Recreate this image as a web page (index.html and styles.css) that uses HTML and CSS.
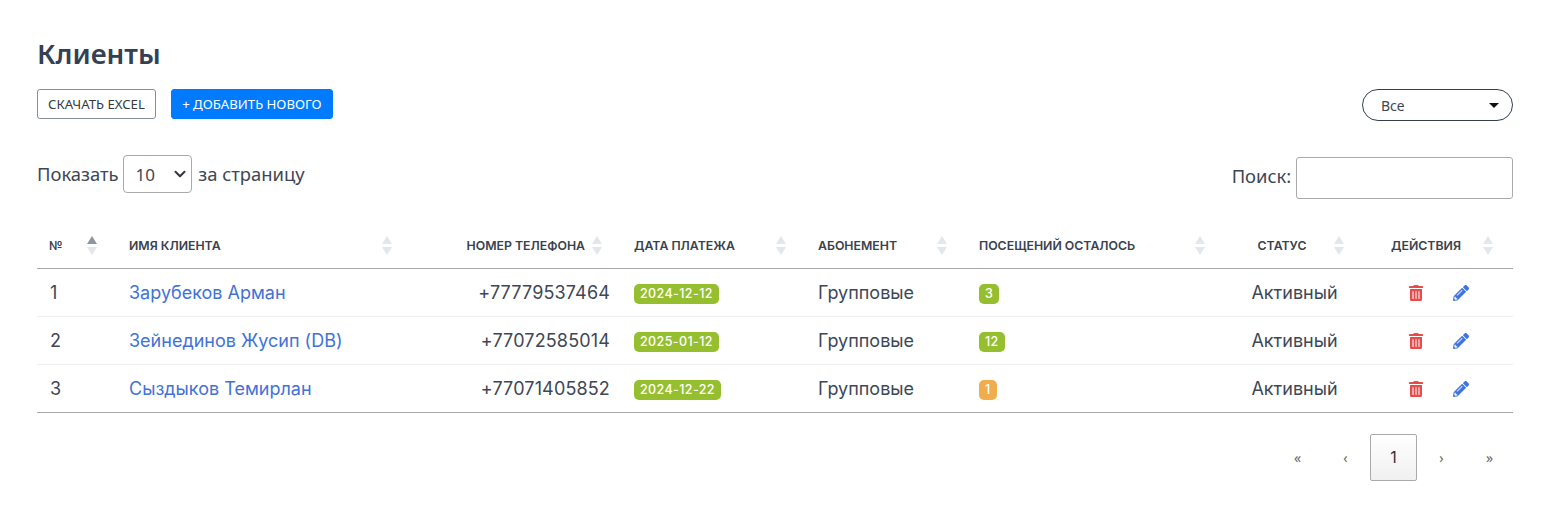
FILE: index.html
```html
<!DOCTYPE html>
<html lang="ru">
<head>
  <meta charset="UTF-8" />
  <title>Клиенты</title>
  <link rel="stylesheet" href="styles.css">
</head>
<body>
  <div class="container">
    <h1>Клиенты</h1>

    <div class="toolbar">
      <div class="toolbar-buttons">
        <button class="btn btn-outline">СКАЧАТЬ EXCEL</button>
        <button class="btn btn-primary">+ ДОБАВИТЬ НОВОГО</button>
      </div>
      <div class="pill-select">
        <span>Все</span>
        <i class="caret"></i>
      </div>
    </div>

    <div class="table-controls">
      <label class="page-size">Показать
        <select>
          <option>10</option>
        </select>
        за страницу</label>
      <label class="search">Поиск: <input type="text" /></label>
    </div>

    <table>
      <colgroup>
        <col class="col-num" />
        <col class="col-name" />
        <col class="col-phone" />
        <col class="col-date" />
        <col class="col-plan" />
        <col class="col-visits" />
        <col class="col-status" />
        <col class="col-actions" />
      </colgroup>
      <thead>
        <tr>
          <th class="sorted">№</th>
          <th>Имя клиента</th>
          <th class="right">Номер телефона</th>
          <th>Дата платежа</th>
          <th>Абонемент</th>
          <th>Посещений осталось</th>
          <th class="center">Статус</th>
          <th class="center">Действия</th>
        </tr>
      </thead>
      <tbody>
        <tr>
          <td class="num">1</td>
          <td><a href="#">Зарубеков Арман</a></td>
          <td class="right phone">+77779537464</td>
          <td><span class="badge green">2024-12-12</span></td>
          <td>Групповые</td>
          <td><span class="badge green">3</span></td>
          <td class="center">Активный</td>
          <td class="center actions">
            <svg class="icon trash" viewBox="0 0 448 512"><path d="M32 464a48 48 0 0 0 48 48h288a48 48 0 0 0 48-48V128H32zm272-256a16 16 0 0 1 32 0v224a16 16 0 0 1-32 0zm-96 0a16 16 0 0 1 32 0v224a16 16 0 0 1-32 0zm-96 0a16 16 0 0 1 32 0v224a16 16 0 0 1-32 0zM432 32H312l-9.4-18.7A24 24 0 0 0 281.1 0H166.8a23.72 23.72 0 0 0-21.4 13.3L136 32H16A16 16 0 0 0 0 48v32a16 16 0 0 0 16 16h416a16 16 0 0 0 16-16V48a16 16 0 0 0-16-16z"/></svg>
            <svg class="icon pencil" viewBox="0 0 512 512"><path d="M497.9 142.1l-46.1 46.1c-4.7 4.7-12.3 4.7-17 0l-111-111c-4.7-4.7-4.7-12.3 0-17l46.1-46.1c18.7-18.7 49.1-18.7 67.9 0l60.1 60.1c18.8 18.7 18.8 49.1 0 67.9zM284.2 99.8L21.6 362.4.4 483.9c-2.9 16.4 11.4 30.6 27.8 27.8l121.5-21.3 262.6-262.6c4.7-4.7 4.7-12.3 0-17l-111-111c-4.8-4.7-12.4-4.7-17.1 0zM124.1 339.9c-5.5-5.5-5.5-14.3 0-19.8l154-154c5.5-5.5 14.3-5.5 19.8 0s5.5 14.3 0 19.8l-154 154c-5.5 5.5-14.3 5.5-19.8 0zM88 424h48v36.3l-64.5 11.3-31.1-31.1L51.7 376H88v48z"/></svg>
          </td>
        </tr>
        <tr>
          <td class="num">2</td>
          <td><a href="#">Зейнединов Жусип (DB)</a></td>
          <td class="right phone">+77072585014</td>
          <td><span class="badge green">2025-01-12</span></td>
          <td>Групповые</td>
          <td><span class="badge green">12</span></td>
          <td class="center">Активный</td>
          <td class="center actions">
            <svg class="icon trash" viewBox="0 0 448 512"><path d="M32 464a48 48 0 0 0 48 48h288a48 48 0 0 0 48-48V128H32zm272-256a16 16 0 0 1 32 0v224a16 16 0 0 1-32 0zm-96 0a16 16 0 0 1 32 0v224a16 16 0 0 1-32 0zm-96 0a16 16 0 0 1 32 0v224a16 16 0 0 1-32 0zM432 32H312l-9.4-18.7A24 24 0 0 0 281.1 0H166.8a23.72 23.72 0 0 0-21.4 13.3L136 32H16A16 16 0 0 0 0 48v32a16 16 0 0 0 16 16h416a16 16 0 0 0 16-16V48a16 16 0 0 0-16-16z"/></svg>
            <svg class="icon pencil" viewBox="0 0 512 512"><path d="M497.9 142.1l-46.1 46.1c-4.7 4.7-12.3 4.7-17 0l-111-111c-4.7-4.7-4.7-12.3 0-17l46.1-46.1c18.7-18.7 49.1-18.7 67.9 0l60.1 60.1c18.8 18.7 18.8 49.1 0 67.9zM284.2 99.8L21.6 362.4.4 483.9c-2.9 16.4 11.4 30.6 27.8 27.8l121.5-21.3 262.6-262.6c4.7-4.7 4.7-12.3 0-17l-111-111c-4.8-4.7-12.4-4.7-17.1 0zM124.1 339.9c-5.5-5.5-5.5-14.3 0-19.8l154-154c5.5-5.5 14.3-5.5 19.8 0s5.5 14.3 0 19.8l-154 154c-5.5 5.5-14.3 5.5-19.8 0zM88 424h48v36.3l-64.5 11.3-31.1-31.1L51.7 376H88v48z"/></svg>
          </td>
        </tr>
        <tr>
          <td class="num">3</td>
          <td><a href="#">Сыздыков Темирлан</a></td>
          <td class="right phone">+77071405852</td>
          <td><span class="badge green">2024-12-22</span></td>
          <td>Групповые</td>
          <td><span class="badge orange">1</span></td>
          <td class="center">Активный</td>
          <td class="center actions">
            <svg class="icon trash" viewBox="0 0 448 512"><path d="M32 464a48 48 0 0 0 48 48h288a48 48 0 0 0 48-48V128H32zm272-256a16 16 0 0 1 32 0v224a16 16 0 0 1-32 0zm-96 0a16 16 0 0 1 32 0v224a16 16 0 0 1-32 0zm-96 0a16 16 0 0 1 32 0v224a16 16 0 0 1-32 0zM432 32H312l-9.4-18.7A24 24 0 0 0 281.1 0H166.8a23.72 23.72 0 0 0-21.4 13.3L136 32H16A16 16 0 0 0 0 48v32a16 16 0 0 0 16 16h416a16 16 0 0 0 16-16V48a16 16 0 0 0-16-16z"/></svg>
            <svg class="icon pencil" viewBox="0 0 512 512"><path d="M497.9 142.1l-46.1 46.1c-4.7 4.7-12.3 4.7-17 0l-111-111c-4.7-4.7-4.7-12.3 0-17l46.1-46.1c18.7-18.7 49.1-18.7 67.9 0l60.1 60.1c18.8 18.7 18.8 49.1 0 67.9zM284.2 99.8L21.6 362.4.4 483.9c-2.9 16.4 11.4 30.6 27.8 27.8l121.5-21.3 262.6-262.6c4.7-4.7 4.7-12.3 0-17l-111-111c-4.8-4.7-12.4-4.7-17.1 0zM124.1 339.9c-5.5-5.5-5.5-14.3 0-19.8l154-154c5.5-5.5 14.3-5.5 19.8 0s5.5 14.3 0 19.8l-154 154c-5.5 5.5-14.3 5.5-19.8 0zM88 424h48v36.3l-64.5 11.3-31.1-31.1L51.7 376H88v48z"/></svg>
          </td>
        </tr>
      </tbody>
    </table>

    <div class="pagination">
      <a href="#">«</a>
      <a href="#">‹</a>
      <a href="#" class="current">1</a>
      <a href="#">›</a>
      <a href="#">»</a>
    </div>
  </div>
</body>
</html>
```

FILE: styles.css
```css
* {
  box-sizing: border-box;
}
html, body {
  overflow: hidden;
}
body {
  margin: 0;
  font-family: Inter, sans-serif;
  font-size: 16px;
  color: #3d4756;
  background: #fff;
}
.container {
  padding: 36px 37px 0;
}
h1 {
  margin: 0 0 19px;
  font-family: "Noto Sans", sans-serif;
  font-size: 27.8px;
  line-height: 34px;
  font-weight: 600;
  color: #344054;
}
.toolbar {
  display: flex;
  justify-content: space-between;
  align-items: flex-start;
}
.toolbar-buttons {
  display: flex;
  gap: 15px;
}
.btn {
  height: 30px;
  padding: 0 10px;
  font-family: "Noto Sans", sans-serif;
  font-size: 13.2px;
  border-radius: 3px;
  cursor: pointer;
}
.btn-outline {
  background: #fff;
  color: #343a40;
  border: 1px solid #868e96;
}
.btn-primary {
  width: 162px;
  padding: 0;
  background: #007bff;
  color: #fff;
  border: 1px solid #007bff;
}
.pill-select {
  width: 151px;
  height: 32px;
  padding: 0 13px 0 18px;
  display: flex;
  align-items: center;
  justify-content: space-between;
  border: 1px solid #343f4f;
  border-radius: 16px;
  font-family: "Noto Sans", sans-serif;
  font-size: 14px;
}
.caret {
  width: 0;
  height: 0;
  border-left: 5px solid transparent;
  border-right: 5px solid transparent;
  border-top: 5px solid #111;
}
.table-controls {
  display: flex;
  justify-content: space-between;
  align-items: center;
  margin-top: 34px;
  height: 46px;
  font-family: "Noto Sans", sans-serif;
  font-size: 18.4px;
}
.page-size {
  margin-top: -8px;
}
.page-size select {
  appearance: none;
  width: 69px;
  height: 38px;
  margin-right: 1px;
  padding: 0 6px 0 11px;
  font-family: "Noto Sans", sans-serif;
  font-size: 17px;
  color: #3d4756;
  background: #fff url("data:image/svg+xml,%3Csvg xmlns='http://www.w3.org/2000/svg' viewBox='0 0 16 16'%3E%3Cpath fill='none' stroke='%23343a40' stroke-linecap='round' stroke-linejoin='round' stroke-width='2.8' d='M2 5l6 6 6-6'/%3E%3C/svg%3E") no-repeat right 3px center / 16px 12px;
  border: 1px solid #aaa;
  border-radius: 4px;
}
.search input {
  width: 217px;
  height: 42px;
  border: 1px solid #aaa;
  border-radius: 3px;
  vertical-align: middle;
}
table {
  width: 1476px;
  margin-top: 20px;
  table-layout: fixed;
  border-collapse: collapse;
}
.col-num { width: 80px; }
.col-name { width: 295px; }
.col-phone { width: 210px; }
.col-date { width: 184px; }
.col-plan { width: 161px; }
.col-visits { width: 258px; }
.col-status { width: 139px; }
.col-actions { width: 149px; }
th {
  position: relative;
  height: 47px;
  padding: 3px 37px 0 12px;
  font-size: 12.3px;
  font-weight: 600;
  text-align: left;
  text-transform: uppercase;
  white-space: nowrap;
  color: #39424e;
  border-bottom: 1px solid #aaa;
}
/* sort arrows */
th::before, th::after {
  content: "";
  position: absolute;
  right: 20px;
  width: 0;
  height: 0;
  border-left: 5px solid transparent;
  border-right: 5px solid transparent;
}
th::before {
  top: 15px;
  border-bottom: 8px solid #e3e6ea;
}
th::after {
  top: 26px;
  border-top: 8px solid #e3e6ea;
}
th.sorted::before {
  border-bottom-color: #8e96a3;
}
td {
  height: 48px;
  padding: 1px 12px 0;
  font-size: 18px;
  white-space: nowrap;
  border-bottom: 1px solid #f0f0f0;
}
tbody tr:last-child td {
  border-bottom: 1px solid #aaa;
}
.num {
  padding-left: 13px;
}
.right {
  text-align: right;
}
.phone {
  letter-spacing: 0.15px;
}
.center {
  text-align: center;
}
a {
  color: #4272d7;
  text-decoration: none;
}
.badge {
  display: inline-block;
  margin-top: 2px;
  padding: 0 6px;
  height: 20px;
  line-height: 20px;
  font-size: 12.5px;
  font-weight: 500;
  letter-spacing: 0.4px;
  color: #fff;
  border-radius: 5px;
  vertical-align: middle;
}
.green {
  background: #95bf2f;
}
.orange {
  background: #f0ad4e;
}
.actions {
  padding-left: 0;
  padding-right: 0;
  font-size: 0;
}
.icon {
  height: 16px;
  vertical-align: middle;
}
.trash {
  width: 14px;
  fill: #e74c4c;
}
.pencil {
  width: 16px;
  margin-left: 30px;
  fill: #3f73e0;
}
.pagination {
  display: flex;
  justify-content: flex-end;
  margin-top: 21px;
}
.pagination a {
  width: 48px;
  height: 47px;
  padding-left: 1px;
  display: flex;
  align-items: center;
  justify-content: center;
  font-family: "Noto Sans", sans-serif;
  font-size: 14px;
  color: #666;
}
.pagination a.current {
  width: 47px;
  margin-left: 1px;
  padding-left: 0;
  font-family: Inter, sans-serif;
  font-size: 16px;
  color: #333;
  background: linear-gradient(#fff, #f0f0f0);
  border: 1px solid #aaa;
  border-radius: 2px;
}
```
